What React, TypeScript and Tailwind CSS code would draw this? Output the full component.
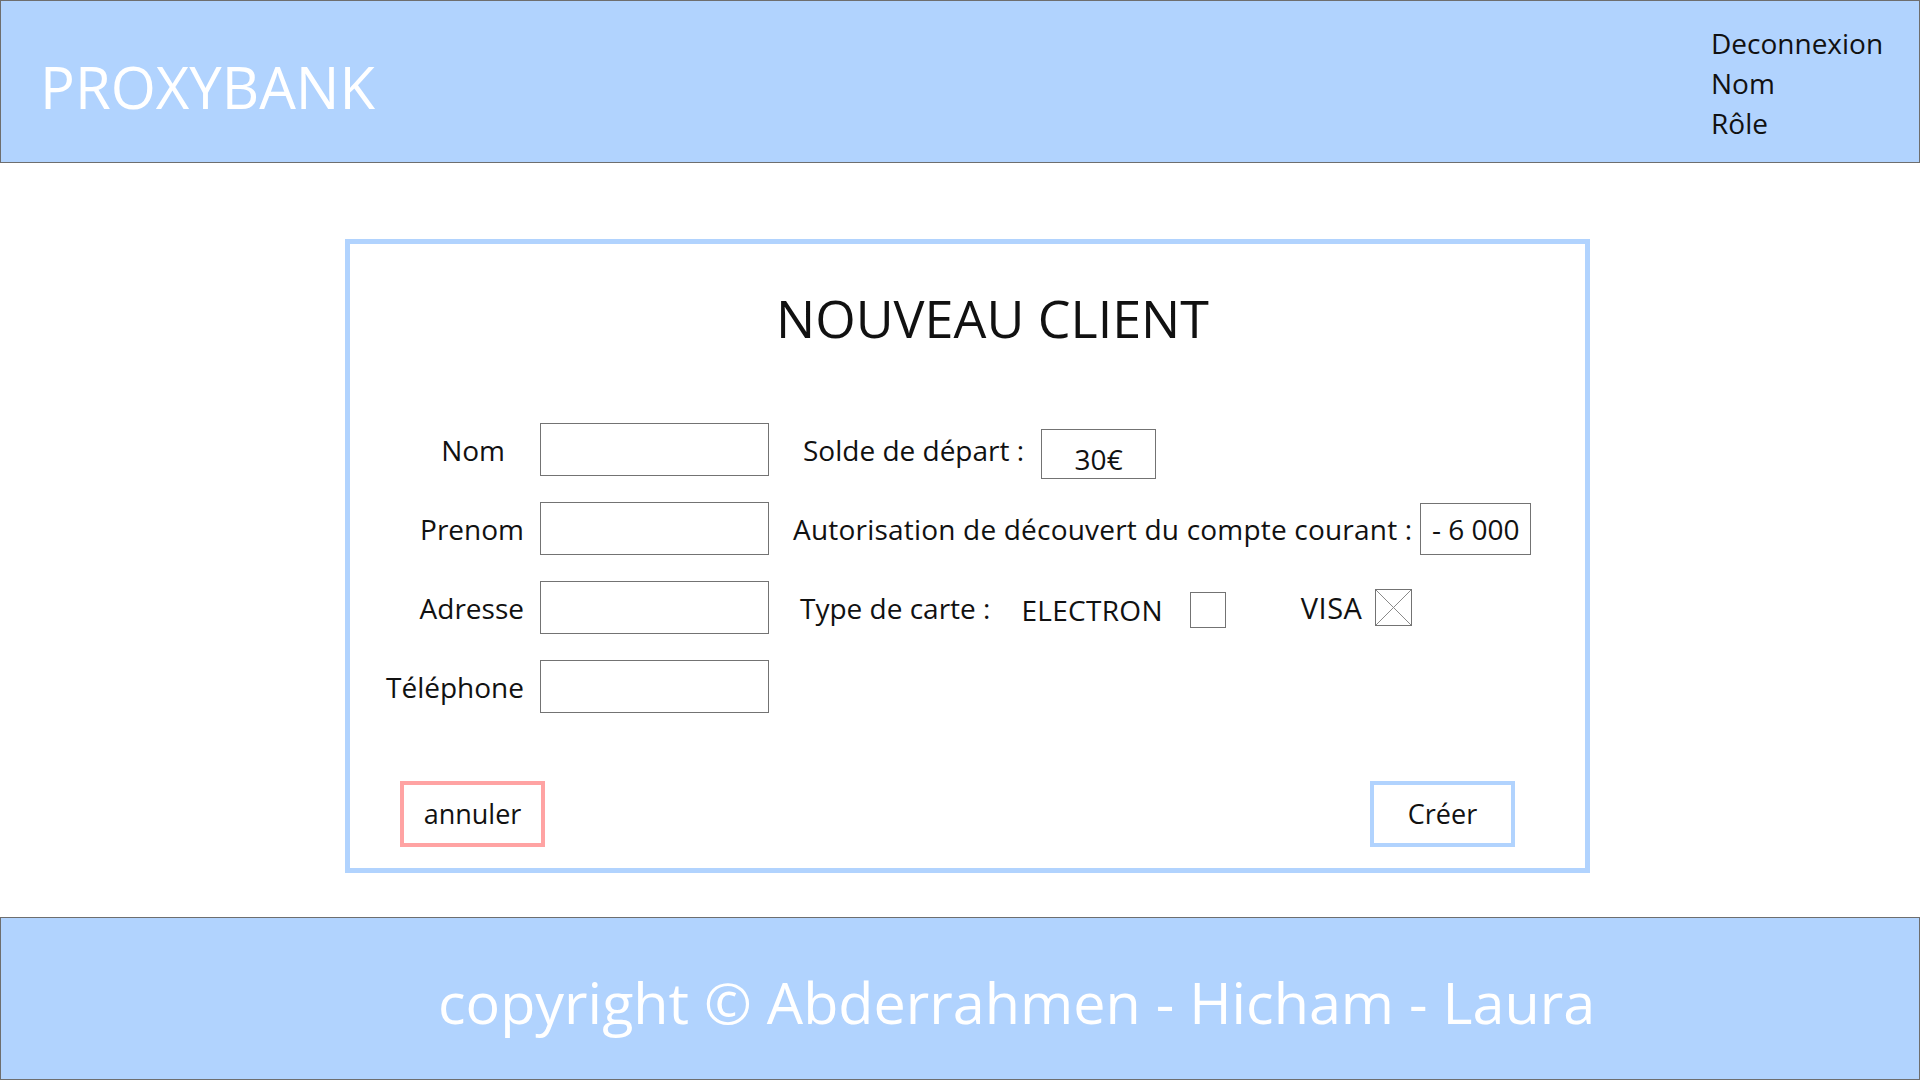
import React from 'react'

const font = "font-['Open_Sans',sans-serif]"
const field = 'w-[229px] h-[53px] border border-[#737373] bg-white'

const rows = [
  { label: 'Nom', pad: 'pr-[19px]' },
  { label: 'Prenom', pad: '' },
  { label: 'Adresse', pad: '' },
  { label: 'Téléphone', pad: '' },
]

function RightPart({ index }: { index: number }) {
  if (index === 0)
    return (
      <div className="flex items-center ml-[34px]">
        <span>Solde de départ :</span>
        <div className="ml-[17px] mt-[9px] w-[115px] h-[50px] border border-[#737373] flex items-center justify-center pt-[10px]">30€</div>
      </div>
    )
  if (index === 1)
    return (
      <div className="flex items-center ml-[24px]">
        <span className="tracking-[0.2px]">Autorisation de découvert du compte courant :</span>
        <div className="ml-[8px] w-[111px] h-[52px] border border-[#737373] flex items-center justify-center">- 6 000</div>
      </div>
    )
  if (index === 2)
    return (
      <div className="flex items-center ml-[31px]">
        <span>Type de carte :</span>
        <span className="ml-[31px] mt-[4px] tracking-[0.3px]">ELECTRON</span>
        <div className="ml-[27px] mt-[5px] w-[36px] h-[36px] border border-[#737373]" />
        <span className="ml-[75px] text-[29px] tracking-[0.5px]">VISA</span>
        <svg className="ml-[13px] mt-[-1px]" width="37" height="37" viewBox="0 0 37 37">
          <rect x="0.5" y="0.5" width="36" height="36" fill="none" stroke="#737373" strokeWidth="1" />
          <line x1="1" y1="1" x2="36" y2="36" stroke="#8a8a8a" strokeWidth="1" />
          <line x1="36" y1="1" x2="1" y2="36" stroke="#8a8a8a" strokeWidth="1" />
        </svg>
      </div>
    )
  return null
}

export default function App() {
  return (
    <div className={`${font} w-[1920px] h-[1080px] bg-white flex flex-col text-[#111]`}>
      <header className="h-[163px] shrink-0 bg-[#b1d3fe] border border-[#6e6e6e] flex items-center justify-between">
        <div className="pl-[39px] pt-[10px] text-white text-[58px]">PROXYBANK</div>
        <div className="w-[208px] text-[28px] leading-[40px] flex flex-col pt-[2px]">
          <span>Deconnexion</span>
          <span>Nom</span>
          <span>Rôle</span>
        </div>
      </header>

      <main className="flex-1">
        <div className="ml-[345px] mt-[76px] w-[1245px] h-[634px] border-[5px] border-[#b1d3fe] flex flex-col text-[28px]">
          <h1 className="pt-[48px] pl-[50px] text-center text-[52px] leading-none">NOUVEAU CLIENT</h1>

          <div className="mt-[79px] flex flex-col gap-[26px]">
            {rows.map((r, i) => (
              <div key={r.label} className="h-[53px] flex items-center">
                <label className={`w-[174px] text-right ${r.pad}`}>{r.label}</label>
                <div className={`ml-[16px] shrink-0 ${field}`} />
                <RightPart index={i} />
              </div>
            ))}
          </div>

          <div className="mt-[68px] pl-[50px] pr-[70px] flex justify-between">
            <button className="w-[145px] h-[66px] border-4 border-[#ffa3a3] text-[27px] flex items-center justify-center">annuler</button>
            <button className="w-[145px] h-[66px] border-4 border-[#b1d3fe] text-[27px] flex items-center justify-center">Créer</button>
          </div>
        </div>
      </main>

      <footer className="h-[163px] shrink-0 bg-[#b1d3fe] border border-[#6e6e6e] flex items-center pl-[437px] pt-[8px]">
        <span className="text-white text-[57.5px]">copyright © Abderrahmen - Hicham - Laura</span>
      </footer>
    </div>
  )
}
